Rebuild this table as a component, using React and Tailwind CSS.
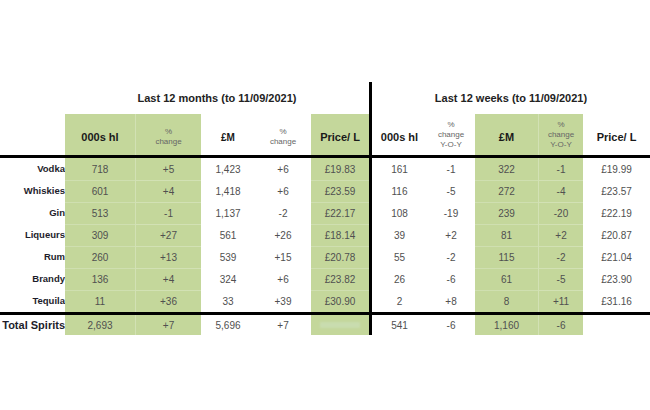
import React from "react";

const rows = [
  ["Vodka", "718", "+5", "1,423", "+6", "£19.83", "161", "-1", "322", "-1", "£19.99"],
  ["Whiskies", "601", "+4", "1,418", "+6", "£23.59", "116", "-5", "272", "-4", "£23.57"],
  ["Gin", "513", "-1", "1,137", "-2", "£22.17", "108", "-19", "239", "-20", "£22.19"],
  ["Liqueurs", "309", "+27", "561", "+26", "£18.14", "39", "+2", "81", "+2", "£20.87"],
  ["Rum", "260", "+13", "539", "+15", "£20.78", "55", "-2", "115", "-2", "£21.04"],
  ["Brandy", "136", "+4", "324", "+6", "£23.82", "26", "-6", "61", "-5", "£23.90"],
  ["Tequila", "11", "+36", "33", "+39", "£30.90", "2", "+8", "8", "+11", "£31.16"],
];

const GREEN = new Set([1, 2, 5, 8, 9]);
const LEFT_BORDER = new Set([2, 9]);

function Cell({ i, children, first }) {
  const green = GREEN.has(i);
  let cls = "flex items-center justify-center text-[10px] text-[#505050]";
  if (green) cls += " bg-[#c4d79b]";
  if (green && LEFT_BORDER.has(i)) cls += " border-l border-[#d2e1b4]";
  if (green && !first) cls += " border-t border-[#cfdfb0]";
  return <div className={cls}>{children}</div>;
}

function DataRow({ r, first }) {
  return (
    <>
      <div className="flex items-center justify-end text-[9.5px] font-bold text-[#1d1d2b]">{r[0]}</div>
      {[1, 2, 3, 4, 5].map((i) => (
        <Cell key={i} i={i} first={first}>{r[i]}</Cell>
      ))}
      <div className="bg-black" />
      {[6, 7, 8, 9, 10].map((i) => (
        <Cell key={i} i={i} first={first}>{r[i]}</Cell>
      ))}
    </>
  );
}

function PctHead({ yoy }) {
  return (
    <div className="flex flex-col items-center leading-[10px] text-[8px] text-[#666]">
      <span>%</span>
      <span>change</span>
      {yoy && <span>Y-O-Y</span>}
    </div>
  );
}

export default function App() {
  const total = ["Total Spirits", "2,693", "+7", "5,696", "+7", "", "541", "-6", "1,160", "-6", ""];
  return (
    <div className="w-[650px] h-[410px] bg-white font-['Liberation_Sans',Arial,sans-serif]">
      <div className="h-[82px]" />
      <div className="grid grid-cols-[65px_70px_66px_54px_56px_58px_3px_55px_48px_63px_45px_67px] grid-rows-[32px_41px_3px_22px_22px_22px_22px_22px_22px_22px_3px_20px]">
        {/* title row */}
        <div />
        <div className="col-span-5 flex items-center justify-center text-[11px] font-bold text-[#222]">
          Last 12 months (to 11/09/2021)
        </div>
        <div className="bg-black" />
        <div className="col-span-5 flex items-center justify-center text-[11px] font-bold text-[#222]">
          Last 12 weeks (to 11/09/2021)
        </div>

        {/* header row */}
        <div />
        <div className="bg-[#c4d79b] flex items-center justify-center pt-[5px] text-[11px] font-bold text-[#1a1a1a]">000s hl</div>
        <div className="bg-[#c4d79b] border-l border-[#d2e1b4] flex items-center justify-center pt-[5px]"><PctHead /></div>
        <div className="flex items-center justify-center pt-[5px] text-[10px] font-bold text-[#1a1a1a]">£M</div>
        <div className="flex items-center justify-center pt-[5px]"><PctHead /></div>
        <div className="bg-[#c4d79b] flex items-center justify-center pt-[5px] text-[11px] font-bold text-[#1a1a1a]">Price/ L</div>
        <div className="bg-black" />
        <div className="flex items-center justify-center pt-[5px] text-[11px] font-bold text-[#1a1a1a]">000s hl</div>
        <div className="flex items-center justify-center"><PctHead yoy /></div>
        <div className="bg-[#c4d79b] flex items-center justify-center pt-[5px] text-[11px] font-bold text-[#1a1a1a]">£M</div>
        <div className="bg-[#c4d79b] border-l border-[#d2e1b4] flex items-center justify-center"><PctHead yoy /></div>
        <div className="flex items-center justify-center pt-[5px] text-[11px] font-bold text-[#1a1a1a]">Price/ L</div>

        <div className="col-span-12 bg-black" />

        {rows.map((r, idx) => (
          <DataRow key={r[0]} r={r} first={idx === 0} />
        ))}

        <div className="col-span-12 bg-black" />

        {/* total row */}
        <div className="flex items-center justify-end text-[11px] font-bold text-[#1d1d2b] whitespace-nowrap">{total[0]}</div>
        {[1, 2, 3, 4].map((i) => (
          <Cell key={i} i={i} first>{total[i]}</Cell>
        ))}
        <div className="bg-[#c4d79b] flex items-center justify-center">
          <div className="w-[40px] h-[6px] bg-[#c9dcaf] blur-[1px]" />
        </div>
        <div className="bg-black" />
        {[6, 7, 8, 9].map((i) => (
          <Cell key={i} i={i} first>{total[i]}</Cell>
        ))}
        <div />
      </div>
    </div>
  );
}
